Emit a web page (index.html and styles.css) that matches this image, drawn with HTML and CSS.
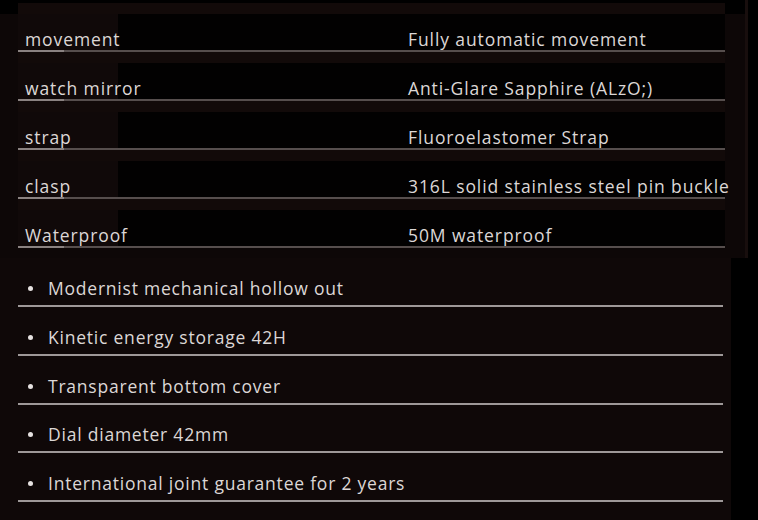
FILE: index.html
```html
<!DOCTYPE html>
<html lang="en">
<head>
<meta charset="utf-8">
<title>Watch specifications</title>
<link rel="stylesheet" href="styles.css">
</head>
<body>
<main class="page">
  <section class="specs">
    <div class="spec-row"><span class="spec-label">movement</span><span class="spec-value">Fully automatic movement</span></div>
    <div class="spec-row"><span class="spec-label">watch mirror</span><span class="spec-value">Anti-Glare Sapphire (ALzO;)</span></div>
    <div class="spec-row"><span class="spec-label">strap</span><span class="spec-value">Fluoroelastomer Strap</span></div>
    <div class="spec-row"><span class="spec-label">clasp</span><span class="spec-value">316L solid stainless steel pin buckle</span></div>
    <div class="spec-row"><span class="spec-label">Waterproof</span><span class="spec-value">50M waterproof</span></div>
  </section>
  <ul class="features">
    <li class="feature">Modernist mechanical hollow out</li>
    <li class="feature">Kinetic energy storage 42H</li>
    <li class="feature">Transparent bottom cover</li>
    <li class="feature">Dial diameter 42mm</li>
    <li class="feature">International joint guarantee for 2 years</li>
  </ul>
</main>
</body>
</html>
```

FILE: styles.css
```css
* { box-sizing: border-box; }

html, body {
  margin: 0;
  padding: 0;
  background: #000;
}

body {
  width: 758px;
  height: 520px;
  overflow: hidden;
  font-family: "Open Sans", "Noto Sans", sans-serif;
  color: #dcd7d6;
}

.page {
  display: flex;
  flex-direction: column;
  width: 758px;
  height: 520px;
}

.specs {
  width: 748px;
  height: 258px;
  flex: none;
  padding: 3px 0 0 18px;
  background:
    linear-gradient(#000 0 14px, transparent 14px),
    #0d0707;
  border-right: 3px solid #180e0d;
}

.spec-row {
  display: grid;
  grid-template-columns: 383px 1fr;
  width: 707px;
  height: 49px;
  padding: 26px 0 0 7px;
  font-size: 17.5px;
  line-height: 21px;
  letter-spacing: 0.9px;
  border-bottom: 2px solid #5a5251;
  border-image: linear-gradient(to right, #8a8281 0 47px, #564e4d 47px) 1;
  background:
    linear-gradient(#120a09 0 11px, transparent 11px),
    linear-gradient(to right, #100909 0 100px, #020101 100px);
}

.spec-label,
.spec-value {
  white-space: nowrap;
}

.features {
  list-style: none;
  margin: 0;
  padding: 0 0 0 18px;
  width: 731px;
  flex: 1;
  background: #0f0808;
}

.feature {
  display: flex;
  align-items: center;
  gap: 15px;
  width: 705px;
  height: 48.75px;
  padding: 14px 0 0 10px;
  line-height: 21px;
  font-size: 17.5px;
  letter-spacing: 0.78px;
  white-space: nowrap;
  border-bottom: 2px solid #9e9898;
}

.feature:first-child {
  height: 49px;
}

.feature::before {
  content: "";
  width: 5px;
  height: 5px;
  border-radius: 50%;
  background: #e6e2e1;
  flex: none;
}
```
